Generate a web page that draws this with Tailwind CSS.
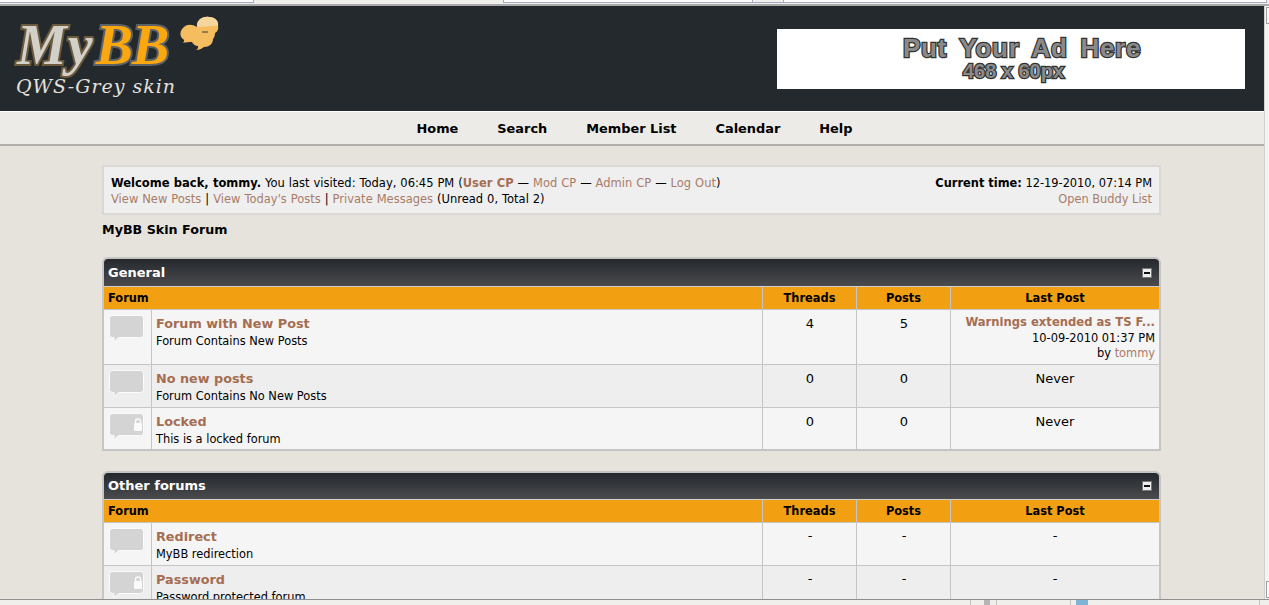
<!DOCTYPE html>
<html><head><meta charset="utf-8"><script src="https://cdn.jsdelivr.net/npm/@tailwindcss/browser@4"></script></head>
<body class="m-0 overflow-hidden">
<div class="w-[1269px] h-[605px] overflow-hidden flex flex-col bg-[#e6e3dd] font-['DejaVu_Sans',sans-serif] text-[11.4px] leading-[16px] text-black">
  <div class="h-[6px] shrink-0 bg-[#f0efec] border-b-2 border-[#a9a9ac] flex items-start">
    <div class="w-[254px] h-[3px] bg-[#fbfbfd] border-r border-b border-[#a8aac0]"></div>
    <div class="w-[249px]"></div>
    <div class="w-[250px] h-[3px] bg-[#fbfbfd] border-x border-b border-[#a8aac0]"></div>
    <div class="w-[31px] h-[3px] bg-[#f0efec] border-r border-b border-[#a8aac0]"></div>
    <div class="w-[483px] h-[3px] bg-[#fbfbfd] border-r border-b border-[#a8aac0]"></div>
  </div>
  <div class="flex-1 min-h-0 flex">
    <div class="flex-1 min-w-0 overflow-hidden">
      <header class="h-[105px] bg-[#24292e] flex justify-between pl-[15px] pr-[19px] relative">
        <div class="relative w-[240px]">
          <div class="absolute left-[2px] top-[7px] text-[56px] leading-[64px] font-bold italic font-['Liberation_Serif',serif] whitespace-nowrap"><span class="text-[#d3d0c9] [-webkit-text-stroke:4px_#6b5a3c] [paint-order:stroke_fill] tracking-[1px]">My</span><span class="text-[#fba70f] [-webkit-text-stroke:4px_#5d6268] [paint-order:stroke_fill] ml-[2px] tracking-[-1px]">BB</span></div>
          <svg class="absolute left-[162px] top-[9px]" width="44" height="40" viewBox="0 0 44 40"><path d="M20 12C19 5 26 1 32 2c6 0 10 4 9 9 1 3-1 6-3 7 0 3-1 5-2 6 0 5-4 8-9 8-2 1-4 3-8 3 2-1 2-2 2-4-3 0-5-2-6-4-3 0-7 0-9 1 1-1 2-3 0-4-4-3-3-9 1-12 3-3 8-3 13 0Z" fill="#f6bd60"/><path d="M20 12C19 5 26 1 32 2c6 0 10 4 9 9-8-1-13 1-21 1Z" fill="#f5d79e"/><path d="M25 17h6" stroke="#3b3a34" stroke-width="1"/></svg>
          <div class="absolute left-[1px] top-[68px] text-[19px] leading-[24px] italic font-['DejaVu_Serif',serif] tracking-[1px] text-[#e4e2dc] whitespace-nowrap">QWS-Grey skin</div>
        </div>
        <div class="mt-[23px] w-[468px] h-[60px] bg-white flex flex-col items-center pt-[5px] font-['Liberation_Sans',sans-serif] font-bold text-[#8a8a8a] [-webkit-text-stroke:2.5px_#333] [paint-order:stroke_fill] whitespace-nowrap">
          <div class="text-[26px] leading-[28px] tracking-[0.7px] [word-spacing:5px] ml-[22px]">Put Your Ad Here</div>
          <div class="text-[20px] leading-[18px] ml-[5px]">468 x 60px</div>
        </div>
      </header>
      <nav class="h-[35px] border-t border-white bg-[#edebe7] border-b-2 border-b-[#b0aeaa] flex justify-center items-center gap-[39px] font-bold text-[12.9px] pl-[5px] pt-[1px]">
        <a>Home</a><a>Search</a><a>Member List</a><a>Calendar</a><a>Help</a>
      </nav>
      <main class="w-[1059px] ml-[102px] pt-[19px]">
        <div class="h-[50px] border-2 border-[#d9d8d6] bg-[#efefef] flex justify-between px-[7px] pt-[8px] text-[11.5px] leading-[16px] whitespace-nowrap">
          <div class="[word-spacing:0.3px]"><b>Welcome back, tommy.</b> You last visited: Today, 06:45 PM (<a class="font-bold text-[#a56d52]">User CP</a> — <a class="text-[#a87c68]">Mod CP</a> — <a class="text-[#a87c68]">Admin CP</a> — <a class="text-[#a87c68]">Log Out</a>)<br><a class="text-[#a87c68]">View New Posts</a> | <a class="text-[#a87c68]">View Today's Posts</a> | <a class="text-[#a87c68]">Private Messages</a> (Unread 0, Total 2)</div>
          <div class="text-right text-[11.4px]"><b>Current time:</b> 12-19-2010, 07:14 PM<br><a class="text-[#a87c68]">Open Buddy List</a></div>
        </div>
        <div class="font-bold text-[12.7px] mt-[7px] h-[26px]">MyBB Skin Forum</div>
        <section class="mt-[9px] border-2 border-[#c5c5c5] rounded-t-[6px] overflow-hidden">
          <div class="h-[28px] bg-gradient-to-b from-[#25292e] to-[#4a4b4d] border-b border-[#cfcfcf] flex justify-between items-center pl-[4px] pr-[7px] text-white font-bold text-[13px]"><span>General</span><span class="w-[10px] h-[10px] bg-[#eeeeee] border border-[#777] flex items-center justify-center"><span class="w-[6px] h-[2px] bg-[#111]"></span></span></div>
          <div class="grid grid-cols-[47px_1fr_94px_94px_209px] h-[23px] bg-[#f39f12] border-b border-[#c5c5c5] font-bold items-stretch leading-[23px]">
            <div class="col-span-2 pl-[4px]">Forum</div><div class="border-l border-[#c5c5c5] text-center">Threads</div><div class="border-l border-[#c5c5c5] text-center">Posts</div><div class="border-l border-[#c5c5c5] text-center">Last Post</div>
          </div>
          <div class="grid grid-cols-[47px_1fr_94px_94px_209px] h-[55px] bg-[#f5f5f5] border-b border-[#c5c5c5]">
            <div class="pt-[5px] pl-[5px]"><svg width="36" height="28" viewBox="0 0 36 28"><path d="M3.500 .5h28a3 3 0 0 1 3 3v16a3 3 0 0 1-3 3H10l-5 4v-4H3.500a3 3 0 0 1-3-3V3.500a3 3 0 0 1 3-3Z" fill="#d4d4d4" stroke="#fbfbfb"/></svg></div>
            <div class="border-l border-[#c5c5c5] pl-[4px] pt-[5px]"><a class="block font-bold text-[12.8px] leading-[18px] text-[#a56d52]">Forum with New Post</a><div>Forum Contains New Posts</div></div>
            <div class="border-l border-[#c5c5c5] text-center text-[13px] pt-[6px] pl-[1px]">4</div><div class="border-l border-[#c5c5c5] text-center text-[13px] pt-[6px] pl-[1px]">5</div>
            <div class="border-l border-[#c5c5c5] text-right pr-[4px] pt-[5px] leading-[15.5px]"><a class="block font-bold text-[11.6px] text-[#a56d52]">Warnings extended as TS F...</a>10-09-2010 01:37 PM<br>by <a class="text-[#a87c68]">tommy</a></div>
          </div>
          <div class="grid grid-cols-[47px_1fr_94px_94px_209px] h-[43px] bg-[#eeeeee] border-b border-[#c5c5c5]">
            <div class="pt-[5px] pl-[5px]"><svg width="36" height="28" viewBox="0 0 36 28"><path d="M3.500 .5h28a3 3 0 0 1 3 3v16a3 3 0 0 1-3 3H10l-5 4v-4H3.500a3 3 0 0 1-3-3V3.500a3 3 0 0 1 3-3Z" fill="#d4d4d4" stroke="#fbfbfb"/></svg></div>
            <div class="border-l border-[#c5c5c5] pl-[4px] pt-[5px]"><a class="block font-bold text-[12.8px] leading-[18px] text-[#a56d52]">No new posts</a><div>Forum Contains No New Posts</div></div>
            <div class="border-l border-[#c5c5c5] text-center text-[13px] pt-[6px] pl-[1px]">0</div><div class="border-l border-[#c5c5c5] text-center text-[13px] pt-[6px] pl-[1px]">0</div><div class="border-l border-[#c5c5c5] text-center text-[13px] pt-[6px]">Never</div>
          </div>
          <div class="grid grid-cols-[47px_1fr_94px_94px_209px] h-[41px] bg-[#f5f5f5]">
            <div class="pt-[5px] pl-[5px]"><svg width="36" height="28" viewBox="0 0 36 28"><path d="M3.500 .5h28a3 3 0 0 1 3 3v16a3 3 0 0 1-3 3H10l-5 4v-4H3.500a3 3 0 0 1-3-3V3.500a3 3 0 0 1 3-3Z" fill="#d4d4d4" stroke="#fbfbfb"/><path d="M26.500 10.500v-2a2.500 2.500 0 0 1 5 0v2" fill="none" stroke="#fafafa" stroke-width="1.400"/><rect x="25" y="10" width="8" height="8" rx="1" fill="#fafafa"/></svg></div>
            <div class="border-l border-[#c5c5c5] pl-[4px] pt-[5px]"><a class="block font-bold text-[12.8px] leading-[18px] text-[#a56d52]">Locked</a><div>This is a locked forum</div></div>
            <div class="border-l border-[#c5c5c5] text-center text-[13px] pt-[6px] pl-[1px]">0</div><div class="border-l border-[#c5c5c5] text-center text-[13px] pt-[6px] pl-[1px]">0</div><div class="border-l border-[#c5c5c5] text-center text-[13px] pt-[6px]">Never</div>
          </div>
        </section>
        <section class="mt-[20px] border-2 border-[#c5c5c5] rounded-t-[6px] overflow-hidden">
          <div class="h-[27px] bg-gradient-to-b from-[#25292e] to-[#4a4b4d] border-b border-[#cfcfcf] flex justify-between items-center pl-[4px] pr-[7px] text-white font-bold text-[13px]"><span>Other forums</span><span class="w-[10px] h-[10px] bg-[#eeeeee] border border-[#777] flex items-center justify-center"><span class="w-[6px] h-[2px] bg-[#111]"></span></span></div>
          <div class="grid grid-cols-[47px_1fr_94px_94px_209px] h-[23px] bg-[#f39f12] border-b border-[#c5c5c5] font-bold items-stretch leading-[23px]">
            <div class="col-span-2 pl-[4px]">Forum</div><div class="border-l border-[#c5c5c5] text-center">Threads</div><div class="border-l border-[#c5c5c5] text-center">Posts</div><div class="border-l border-[#c5c5c5] text-center">Last Post</div>
          </div>
          <div class="grid grid-cols-[47px_1fr_94px_94px_209px] h-[43px] bg-[#f5f5f5] border-b border-[#c5c5c5]">
            <div class="pt-[5px] pl-[5px]"><svg width="36" height="28" viewBox="0 0 36 28"><path d="M3.500 .5h28a3 3 0 0 1 3 3v16a3 3 0 0 1-3 3H10l-5 4v-4H3.500a3 3 0 0 1-3-3V3.500a3 3 0 0 1 3-3Z" fill="#d4d4d4" stroke="#fbfbfb"/></svg></div>
            <div class="border-l border-[#c5c5c5] pl-[4px] pt-[5px]"><a class="block font-bold text-[12.8px] leading-[18px] text-[#a56d52]">Redirect</a><div>MyBB redirection</div></div>
            <div class="border-l border-[#c5c5c5] text-center text-[13px] pt-[5px] pl-[1px]">-</div><div class="border-l border-[#c5c5c5] text-center text-[13px] pt-[5px] pl-[1px]">-</div><div class="border-l border-[#c5c5c5] text-center text-[13px] pt-[5px]">-</div>
          </div>
          <div class="grid grid-cols-[47px_1fr_94px_94px_209px] h-[43px] bg-[#eeeeee] border-b border-[#c5c5c5]">
            <div class="pt-[5px] pl-[5px]"><svg width="36" height="28" viewBox="0 0 36 28"><path d="M3.500 .5h28a3 3 0 0 1 3 3v16a3 3 0 0 1-3 3H10l-5 4v-4H3.500a3 3 0 0 1-3-3V3.500a3 3 0 0 1 3-3Z" fill="#d4d4d4" stroke="#fbfbfb"/><path d="M26.500 10.500v-2a2.500 2.500 0 0 1 5 0v2" fill="none" stroke="#fafafa" stroke-width="1.400"/><rect x="25" y="10" width="8" height="8" rx="1" fill="#fafafa"/></svg></div>
            <div class="border-l border-[#c5c5c5] pl-[4px] pt-[5px]"><a class="block font-bold text-[12.8px] leading-[18px] text-[#a56d52]">Password</a><div>Password protected forum</div></div>
            <div class="border-l border-[#c5c5c5] text-center text-[13px] pt-[5px] pl-[1px]">-</div><div class="border-l border-[#c5c5c5] text-center text-[13px] pt-[5px] pl-[1px]">-</div><div class="border-l border-[#c5c5c5] text-center text-[13px] pt-[5px]">-</div>
          </div>
        </section>
      </main>
    </div>
    <div class="w-[5px] shrink-0 bg-[#f4f4f2] border-l border-[#d0d0d0] flex flex-col justify-between">
      <div class="h-[17px] bg-[#f8f8f8] border-t border-l border-b border-[#a0a0a0] ml-[1px] mt-[1px]"></div>
      <div class="h-[17px] bg-[#f8f8f8] border-t border-l border-b border-[#a0a0a0] ml-[1px] mb-[1px]"></div>
    </div>
  </div>
  <div class="h-[6px] shrink-0 bg-[#f0efec] border-t border-[#8f8f8f] flex">
    <div class="w-[971px] border-r border-[#c4c4c4]"></div>
    <div class="w-[26px] border-r border-[#c4c4c4] pl-[13px]"><div class="w-[6px] h-[5px] bg-[#b5b5b5]"></div></div>
    <div class="w-[74px] border-r border-[#c4c4c4]"></div>
    <div class="w-[189px] border-r border-[#c4c4c4] pl-[5px]"><div class="w-[12px] h-[5px] bg-[#7fb4d6]"></div></div>
  </div>
</div>
</body></html>
